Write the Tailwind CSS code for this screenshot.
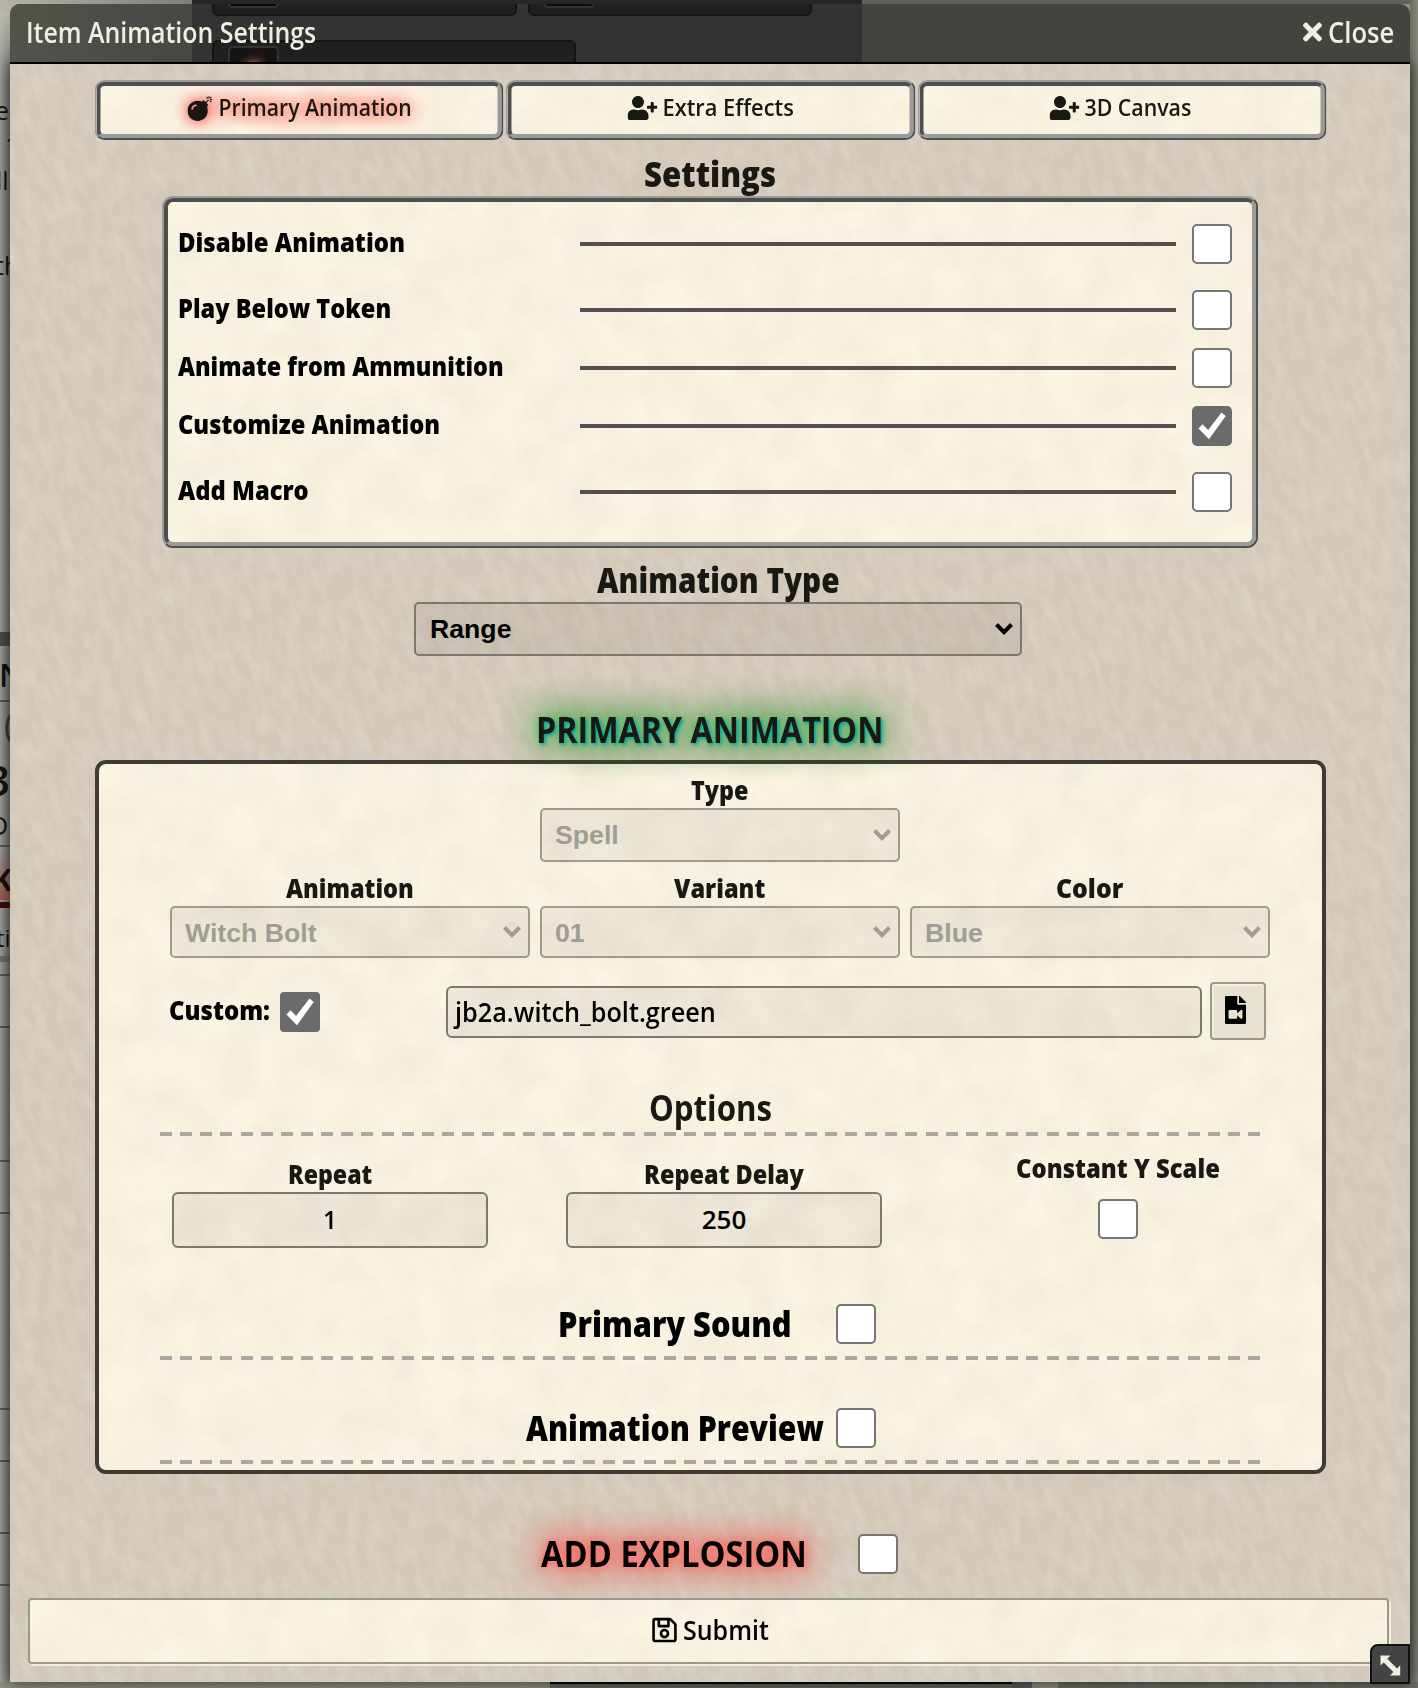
<!DOCTYPE html>
<html lang="en">
<head>
<meta charset="utf-8">
<title>Item Animation Settings</title>
<script src="https://cdn.jsdelivr.net/npm/@tailwindcss/browser@4"></script>
</head>
<body class="relative h-[1688px] w-[1418px] overflow-hidden bg-[#8e8f87] font-['Open_Sans','Noto_Sans',sans-serif] text-[#191813]">

<svg class="absolute size-0" aria-hidden="true">
  <defs>
    <filter id="stucco" x="0" y="0" width="100%" height="100%" color-interpolation-filters="sRGB">
      <feTurbulence type="fractalNoise" baseFrequency="0.09 0.04" numOctaves="3" seed="4"/>
      <feColorMatrix values="0 0 0 0 0.88  0 0 0 0 0.85  0 0 0 0 0.82  1.500 0 0 0 -0.500"/>
    </filter>
    <filter id="paper" x="0" y="0" width="100%" height="100%" color-interpolation-filters="sRGB">
      <feTurbulence type="fractalNoise" baseFrequency="0.025" numOctaves="5" seed="9"/>
      <feColorMatrix values="0 0 0 0 0.89  0 0 0 0 0.86  0 0 0 0 0.79  0.600 0 0 0 -0.150"/>
    </filter>
    <symbol id="check" viewBox="0 0 40 40"><path d="M6.5 22.5l4-4.2 5.6 5.6L29.5 6.5l4.2 3.4L17 33.2z" fill="#fff"/></symbol>
    <symbol id="chev" viewBox="0 0 20 16"><path d="M2.5 3.5L10 11.2l7.500-7.700" fill="none" stroke="currentColor" stroke-width="4"/></symbol>
    <symbol id="userplus" viewBox="0 0 640 512"><path fill="currentColor" d="M624 208h-64v-64c0-8.800-7.200-16-16-16h-32c-8.800 0-16 7.200-16 16v64h-64c-8.800 0-16 7.200-16 16v32c0 8.800 7.200 16 16 16h64v64c0 8.800 7.200 16 16 16h32c8.800 0 16-7.200 16-16v-64h64c8.800 0 16-7.200 16-16v-32c0-8.800-7.200-16-16-16zm-400 48c70.700 0 128-57.300 128-128S294.700 0 224 0 96 57.300 96 128s57.300 128 128 128zm89.600 32h-16.700c-22.200 10.200-46.900 16-72.900 16s-50.600-5.800-72.900-16h-16.700C60.200 288 0 348.200 0 422.400V464c0 26.500 21.500 48 48 48h352c26.500 0 48-21.500 48-48v-41.600c0-74.200-60.200-134.400-134.400-134.400z"/></symbol>
  </defs>
</svg>

<!-- Desktop behind the window -->
<div class="absolute inset-0 bg-[#8e8f87]"></div>
<div class="absolute top-0 left-0 h-full w-[10px] overflow-hidden bg-linear-to-r from-[#a3a49f] to-[#7c7d78] text-[#14140f]">
  <div class="absolute top-0 h-16 w-full bg-linear-to-b from-[#c0bfb0] to-transparent"></div>
  <div class="absolute top-[632px] h-[14px] w-full bg-[#4d4e4a]"></div>
  <div class="absolute top-[700px] h-[2px] w-full bg-[#5a5b56]"></div>
  <div class="absolute top-[845px] h-[2px] w-full bg-[#5a5b56]"></div>
  <div class="absolute top-[850px] h-[50px] w-full bg-linear-to-b from-transparent to-[#a85a55]"></div>
  <div class="absolute top-[902px] h-[6px] w-full bg-[#3f0c10]"></div>
  <div class="absolute top-[956px] h-[6px] w-full bg-[#70716a]"></div>
  <div class="absolute top-[974px] h-[2px] w-full bg-[#5a5b56]"></div>
  <div class="absolute top-[1026px] h-[2px] w-full bg-[#5a5b56]"></div>
  <div class="absolute top-[1160px] h-[2px] w-full bg-[#5a5b56]"></div>
  <div class="absolute top-[1212px] h-[2px] w-full bg-[#5a5b56]"></div>
  <div class="absolute top-[1408px] h-[2px] w-full bg-[#5a5b56]"></div>
  <div class="absolute top-[1460px] h-[2px] w-full bg-[#5a5b56]"></div>
  <div class="absolute top-[1532px] h-[2px] w-full bg-[#5a5b56]"></div>
  <div class="absolute top-[1584px] h-[2px] w-full bg-[#5a5b56]"></div>
  <span class="absolute top-[92px] left-[-5px] text-[25px] leading-9">e</span>
  <span class="absolute top-[127px] left-[5px] text-[25px] leading-9">1</span>
  <span class="absolute top-[162px] left-[-4px] text-[25px] leading-9">ll</span>
  <span class="absolute top-[247px] left-[-5px] text-[25px] leading-9">th</span>
  <span class="absolute top-[657px] left-[-1px] text-[32px] leading-9 font-semibold">N</span>
  <span class="absolute top-[707px] left-[4px] text-[34px] leading-9 text-[#3c3d38]">(</span>
  <span class="absolute top-[762px] left-[-14px] text-[42px] leading-9 font-semibold">3</span>
  <span class="absolute top-[807px] left-[-10px] text-[25px] leading-9">D</span>
  <span class="absolute top-[862px] left-[-8px] text-[30px] leading-9 font-bold">K</span>
  <span class="absolute top-[920px] left-[-4px] text-[24px] leading-9">ti</span>
</div>
<div class="absolute top-0 right-0 h-full w-[8px] bg-linear-to-r from-[#6a6b62] to-[#84857c]"></div>
<div class="absolute top-0 left-[10px] h-[4px] w-[1400px] bg-[#5f6056]"></div>
<div class="absolute top-0 left-0 h-[12px] w-[192px] bg-linear-to-r from-[#b5b4a7] to-[#7e7e74]"></div>
<div class="absolute top-0 left-[192px] h-[14px] w-[670px] bg-[#262626]"></div>
<div class="absolute bottom-0 left-0 flex h-[6px] w-full bg-[#8f8f86]">
  <div class="ml-[550px] h-full w-[462px] border-t-2 border-black bg-[#646464]"></div>
  <div class="h-full w-[20px] bg-[#5a5a5a]"></div>
  <div class="h-full w-[26px] bg-[#8f8f86]"></div>
  <div class="h-full flex-1 bg-[#6c6d66]"></div>
</div>

<!-- Window -->
<main class="absolute top-[4px] left-[10px] flex h-[1678px] w-[1400px] flex-col">
  <header class="relative z-10 h-[60px] shrink-0 overflow-hidden rounded-t-[10px] border-b-2 border-black bg-[#44433e]">
    <div class="absolute inset-y-0 left-0 w-[182px] bg-linear-to-r from-[#53534e] to-[#474743]"></div>
    <div class="absolute inset-y-0 left-[182px] w-[670px] bg-[#333333]"></div>
    <div class="absolute -top-2 left-[202px] h-[20px] w-[305px] rounded-b-[6px] border-2 border-[#141414] bg-[#202020]"></div>
    <div class="absolute -top-2 left-[518px] h-[20px] w-[284px] rounded-b-[6px] border-2 border-[#141414] bg-[#202020]"></div>
    <div class="absolute -top-4 left-[218px] h-[20px] w-[51px] rounded-[4px] border-2 border-[#333] bg-[#08080f]"></div>
    <div class="absolute -top-4 left-[534px] h-[20px] w-[51px] rounded-[4px] border-2 border-[#333] bg-[#0b0b18]"></div>
    <div class="absolute top-[36px] left-[202px] h-[40px] w-[364px] rounded-t-[6px] border-2 border-[#141414] bg-[#202020]"></div>
    <div class="absolute top-[42px] left-[218px] h-[40px] w-[51px] rounded-[5px] border-2 border-[#333] bg-[radial-gradient(circle_at_50%_22px,#7b6358_0_6px,#3a2018_12px,#181414_17px)]"></div>
    <div class="relative flex h-[56px] items-center pr-[16px] pl-[16px] text-[28px] font-semibold text-[#f0f0e0]">
      <h4 class="flex-1"><span data-w="290">Item Animation Settings</span></h4>
      <svg class="mr-[6px] h-[28px] w-[19px]" viewBox="0 0 352 512"><path fill="currentColor" d="M242.720 256l100.070-100.070c12.280-12.280 12.280-32.190 0-44.480l-22.240-22.240c-12.280-12.280-32.190-12.280-44.480 0L176 189.280 75.930 89.210c-12.280-12.280-32.190-12.280-44.480 0L9.210 111.450c-12.280 12.280-12.280 32.190 0 44.480L109.280 256 9.210 356.070c-12.280 12.280-12.280 32.190 0 44.480l22.240 22.240c12.280 12.280 32.200 12.280 44.480 0L176 322.720l100.070 100.070c12.280 12.280 32.200 12.280 44.480 0l22.240-22.240c12.280-12.280 12.280-32.190 0-44.480L242.720 256z"/></svg>
      <span data-w="66">Close</span>
    </div>
  </header>

  <section class="relative isolate flex-1 bg-[#d3c8b7] shadow-[0_0_16px_rgba(0,0,0,0.7)]">
    <svg class="absolute inset-0 -z-10 size-full"><g transform="rotate(-20 700 800)"><rect x="-400" y="-400" width="2300" height="2500" filter="url(#stucco)" opacity="0.75"/></g></svg>

    <!-- Tabs -->
    <nav class="mx-auto grid w-[1232px] translate-x-[0.5px] grid-cols-3 gap-[2px] pt-4 text-[23.500px] font-semibold">
      <div class="h-[60px] rounded-[10px] border-2 border-[#9b9b9b] border-r-[#4e4e4e] border-b-[#4e4e4e]">
        <div class="relative isolate flex h-full items-center justify-center gap-[6px] overflow-hidden rounded-[8px] border-4 border-[#4e4e4e] border-r-[#9b9b9b] border-b-[#9b9b9b] bg-[#fdf5e4] pb-[4px]">
          <svg class="absolute inset-0 -z-10 size-full"><rect width="100%" height="100%" filter="url(#paper)"/></svg>
          <svg class="size-[25px] drop-shadow-[0_0_8px_red]" viewBox="0 0 512 512"><path fill="currentColor" d="M440.500 88.500l-52 52L415 167c9.400 9.400 9.400 24.600 0 33.900l-17.400 17.400c11.800 26.100 18.400 55.100 18.400 85.600 0 114.900-93.100 208-208 208S0 418.900 0 304 93.100 96 208 96c30.500 0 59.500 6.600 85.600 18.400L311 97c9.400-9.400 24.600-9.400 33.900 0l26.500 26.500 52-52 17.100 17zM500 60h-24c-6.600 0-12 5.400-12 12s5.400 12 12 12h24c6.600 0 12-5.400 12-12s-5.400-12-12-12zM440 0c-6.600 0-12 5.400-12 12v24c0 6.600 5.400 12 12 12s12-5.400 12-12V12c0-6.600-5.400-12-12-12zm33.900 55l17-17c4.700-4.700 4.700-12.300 0-17-4.700-4.700-12.300-4.700-17 0l-17 17c-4.700 4.700-4.700 12.300 0 17 4.800 4.700 12.400 4.700 17 0zm-67.800 0c4.700 4.700 12.300 4.700 17 0 4.700-4.700 4.700-12.300 0-17l-17-17c-4.700-4.700-12.300-4.700-17 0-4.700 4.700-4.700 12.300 0 17l17 17zm67.800 34c-4.700-4.700-12.300-4.700-17 0-4.700 4.700-4.700 12.300 0 17l17 17c4.700 4.700 12.300 4.700 17 0 4.700-4.700 4.700-12.300 0-17l-17-17zM112 272c0-35.300 28.700-64 64-64 8.800 0 16-7.200 16-16s-7.200-16-16-16c-52.900 0-96 43.100-96 96 0 8.800 7.200 16 16 16s16-7.200 16-16z"/></svg>
          <span class="[text-shadow:0_0_20px_red,0_0_20px_#ff000080]" data-w="193">Primary Animation</span>
        </div>
      </div>
      <div class="h-[60px] rounded-[10px] border-2 border-[#9b9b9b] border-r-[#4e4e4e] border-b-[#4e4e4e]">
        <div class="relative isolate flex h-full items-center justify-center gap-[5px] overflow-hidden rounded-[8px] border-4 border-[#4e4e4e] border-r-[#9b9b9b] border-b-[#9b9b9b] bg-[#fdf5e4] pb-[4px]">
          <svg class="absolute inset-0 -z-10 size-full"><rect width="100%" height="100%" filter="url(#paper)"/></svg>
          <svg class="h-[24px] w-[30px]"><use href="#userplus"/></svg>
          <span data-w="131">Extra Effects</span>
        </div>
      </div>
      <div class="h-[60px] rounded-[10px] border-2 border-[#9b9b9b] border-r-[#4e4e4e] border-b-[#4e4e4e]">
        <div class="relative isolate flex h-full items-center justify-center gap-[5px] overflow-hidden rounded-[8px] border-4 border-[#4e4e4e] border-r-[#9b9b9b] border-b-[#9b9b9b] bg-[#fdf5e4] pr-[3px] pb-[4px]">
          <svg class="absolute inset-0 -z-10 size-full"><rect width="100%" height="100%" filter="url(#paper)"/></svg>
          <svg class="h-[24px] w-[30px]"><use href="#userplus"/></svg>
          <span data-w="107">3D Canvas</span>
        </div>
      </div>
    </nav>

    <!-- Settings -->
    <h2 class="h-[56px] pt-[10px] text-center text-[35px] leading-[48px] font-extrabold"><span data-w="132">Settings</span></h2>
    <div class="mx-auto h-[352px] w-[1096px] rounded-[11px] border-2 border-[#9b9b9b] border-r-[#4e4e4e] border-b-[#4e4e4e]">
      <div class="relative isolate h-full overflow-hidden rounded-[9px] border-4 border-[#4e4e4e] border-r-[#9b9b9b] border-b-[#9b9b9b] bg-[#fdf5e4] pt-[13px] pr-[20px] pl-[10px] text-[27px] font-extrabold text-black">
        <svg class="absolute inset-0 -z-10 size-full"><rect width="100%" height="100%" filter="url(#paper)"/></svg>
        <div class="mb-2 flex h-[58px] items-center">
          <label class="w-[402px] pb-[3px]"><span data-w="227">Disable Animation</span></label>
          <div class="mr-4 h-1 flex-1 bg-[#515151]"></div>
          <div class="size-[40px] rounded-[5px] border-2 border-[#767676] bg-white"></div>
        </div>
        <div class="flex h-[58px] items-center">
          <label class="w-[402px] pb-[3px]"><span data-w="213">Play Below Token</span></label>
          <div class="mr-4 h-1 flex-1 bg-[#515151]"></div>
          <div class="size-[40px] rounded-[5px] border-2 border-[#767676] bg-white"></div>
        </div>
        <div class="flex h-[58px] items-center">
          <label class="w-[402px] pb-[3px]"><span data-w="326">Animate from Ammunition</span></label>
          <div class="mr-4 h-1 flex-1 bg-[#515151]"></div>
          <div class="size-[40px] rounded-[5px] border-2 border-[#767676] bg-white"></div>
        </div>
        <div class="mb-2 flex h-[58px] items-center">
          <label class="w-[402px] pb-[3px]"><span data-w="262">Customize Animation</span></label>
          <div class="mr-4 h-1 flex-1 bg-[#515151]"></div>
          <div class="size-[40px] rounded-[5px] bg-[#6b6b6b]"><svg class="size-[40px]"><use href="#check"/></svg></div>
        </div>
        <div class="flex h-[58px] items-center">
          <label class="w-[402px] pb-[3px]"><span data-w="131">Add Macro</span></label>
          <div class="mr-4 h-1 flex-1 bg-[#515151]"></div>
          <div class="size-[40px] rounded-[5px] border-2 border-[#767676] bg-white"></div>
        </div>
      </div>
    </div>

    <!-- Animation type -->
    <div class="ml-[404px] w-[608px]">
      <h2 class="h-[54px] pt-[8px] text-center text-[35px] leading-[47px] font-extrabold"><span data-w="243">Animation Type</span></h2>
      <div class="flex h-[54px] items-center justify-between rounded-[5px] border-2 border-[#7a7971] bg-black/5 pr-[6px] pl-[14px] font-['Liberation_Sans',Arial,sans-serif] text-[26.670px] font-bold text-black">
        <span>Range</span><svg class="h-[16px] w-[20px]"><use href="#chev"/></svg>
      </div>
    </div>

    <h2 class="relative z-10 h-[104px] pt-[43px] text-center text-[35px] leading-[62px] font-bold"><span class="[text-shadow:2px_2px_4px_#00a5a5,0_0_10px_#4fc45a,0_0_40px_green,0_0_50px_green]" data-w="347">PRIMARY ANIMATION</span></h2>

    <!-- Primary animation panel -->
    <div class="relative isolate ml-[85px] flex h-[714px] w-[1231px] flex-col overflow-hidden rounded-[11px] border-4 border-[#3d3b36] bg-[#fdf5e4] pt-[7px] text-[27px]">
      <svg class="absolute inset-0 -z-10 size-full"><rect width="100%" height="100%" filter="url(#paper)"/></svg>
      <div class="ml-[71px] grid w-[1100px] grid-cols-[360px_360px_360px] gap-x-[10px] text-center font-bold">
        <div class="col-start-2">
          <div class="leading-[37px] font-extrabold"><span data-w="57">Type</span></div>
          <div class="flex h-[54px] items-center justify-between rounded-[5px] border-2 border-[#9c9b91] bg-black/5 pr-[6px] pl-[13px] font-['Liberation_Sans',Arial,sans-serif] text-[26.670px] text-[#9f9d97]"><span>Spell</span><svg class="h-[16px] w-[20px]"><use href="#chev"/></svg></div>
        </div>
        <div class="col-start-1 pt-[7px]">
          <div class="leading-[37px] font-extrabold"><span data-w="128">Animation</span></div>
          <div class="flex h-[52px] items-center justify-between rounded-[5px] border-2 border-[#9c9b91] bg-black/5 pr-[6px] pl-[13px] font-['Liberation_Sans',Arial,sans-serif] text-[26.670px] text-[#9f9d97]"><span class="pt-px">Witch Bolt</span><svg class="h-[16px] w-[20px]"><use href="#chev"/></svg></div>
        </div>
        <div class="pt-[7px]">
          <div class="leading-[37px] font-extrabold"><span data-w="91">Variant</span></div>
          <div class="flex h-[52px] items-center justify-between rounded-[5px] border-2 border-[#9c9b91] bg-black/5 pr-[6px] pl-[13px] font-['Liberation_Sans',Arial,sans-serif] text-[26.670px] text-[#9f9d97]"><span class="pt-px">01</span><svg class="h-[16px] w-[20px]"><use href="#chev"/></svg></div>
        </div>
        <div class="pt-[7px]">
          <div class="leading-[37px] font-extrabold"><span data-w="67">Color</span></div>
          <div class="flex h-[52px] items-center justify-between rounded-[5px] border-2 border-[#9c9b91] bg-black/5 pr-[6px] pl-[13px] font-['Liberation_Sans',Arial,sans-serif] text-[26.670px] text-[#9f9d97]"><span class="pt-px">Blue</span><svg class="h-[16px] w-[20px]"><use href="#chev"/></svg></div>
        </div>
      </div>

      <div class="mt-[24px] ml-[70px] flex h-[60px] items-center text-black">
        <label class="w-[111px] pb-[3px] font-extrabold"><span data-w="101">Custom:</span></label>
        <div class="size-[40px] rounded-[4px] bg-[#6b6b6b]"><svg class="size-[40px]"><use href="#check"/></svg></div>
        <div class="ml-[126px] flex h-[52px] w-[756px] items-center rounded-[6px] border-2 border-[#7a7971] bg-black/5 pl-[7px] font-semibold"><span data-w="261">jb2a.witch_bolt.green</span></div>
        <div class="mb-[2px] ml-[8px] flex h-[58px] w-[56px] items-center justify-center rounded-[4px] border-2 border-[#98998b] bg-[#e8e0d0] pb-[3px] shadow-[inset_2px_2px_0_#eef0e2]">
          <svg class="mr-[5px] h-[28px] w-[21px]" viewBox="0 0 384 512"><path d="M384 121.941V128H256V0h6.059c6.365 0 12.470 2.529 16.971 7.029l97.941 97.941A24.005 24.005 0 0 1 384 121.941zM224 136V0H24C10.745 0 0 10.745 0 24v464c0 13.255 10.745 24 24 24h336c13.255 0 24-10.745 24-24V160H248c-13.200 0-24-10.800-24-24zm96 144.016v111.963c0 21.445-25.943 31.998-40.971 16.971L224 353.941V392c0 13.255-10.745 24-24 24H88c-13.255 0-24-10.745-24-24V280c0-13.255 10.745-24 24-24h112c13.255 0 24 10.745 24 24v38.059l55.029-55.013c15.011-15.010 40.971-4.491 40.971 16.970z"/></svg>
        </div>
      </div>

      <h2 class="mt-[40px] -mb-px text-center text-[35px] leading-[51px] font-bold"><span data-w="123">Options</span></h2>
      <div class="ml-[61px] h-1 w-[1100px] bg-[repeating-linear-gradient(90deg,#aaa7a0_0_12px,transparent_12px_20.148px)]"></div>

      <div class="mt-[12px] ml-[34px] grid h-[100px] w-[1182px] grid-cols-3 text-center">
        <div class="pt-[7px]">
          <div class="leading-[37px] font-extrabold"><span data-w="84">Repeat</span></div>
          <div class="mx-auto h-[56px] w-[316px] rounded-[6px] border-2 border-[#7a7971] bg-black/5 text-[26px] leading-[50px] font-semibold text-black"><span data-w="14">1</span></div>
        </div>
        <div class="pt-[7px]">
          <div class="leading-[37px] font-extrabold"><span data-w="160">Repeat Delay</span></div>
          <div class="mx-auto h-[56px] w-[316px] rounded-[6px] border-2 border-[#7a7971] bg-black/5 text-[26px] leading-[50px] font-semibold text-black"><span data-w="45">250</span></div>
        </div>
        <div class="flex flex-col items-center">
          <div class="leading-[39px] font-extrabold"><span data-w="204">Constant Y Scale</span></div>
          <div class="mt-[12px] size-[40px] rounded-[5px] border-2 border-[#767676] bg-white"></div>
        </div>
      </div>

      <div class="mt-[56px] mb-3 ml-[459px] flex h-[40px] items-center gap-[44px] text-[35px] leading-[38px] font-extrabold text-black">
        <span data-w="234">Primary Sound</span>
        <div class="size-[40px] rounded-[5px] border-2 border-[#767676] bg-white"></div>
      </div>
      <div class="ml-[61px] h-1 w-[1100px] shrink-0 bg-[repeating-linear-gradient(90deg,#aaa7a0_0_12px,transparent_12px_20.148px)]"></div>
      <div class="mt-[48px] mb-3 ml-[427px] flex h-[40px] items-center gap-[12px] text-[35px] leading-[38px] font-extrabold text-black">
        <span data-w="298">Animation Preview</span>
        <div class="size-[40px] rounded-[5px] border-2 border-[#767676] bg-white"></div>
      </div>
      <div class="ml-[61px] h-1 w-[1100px] shrink-0 bg-[repeating-linear-gradient(90deg,#aaa7a0_0_12px,transparent_12px_20.148px)]"></div>
    </div>

    <div class="mt-[60px] ml-[531px] flex h-[40px] items-center gap-[51px] text-[35px] leading-[38px] font-bold text-black">
      <span class="[text-shadow:1px_1px_4px_#ff8a8a,0_0_10px_#ff5a4a,0_0_40px_red,0_0_50px_#ff000080]" data-w="266">ADD EXPLOSION</span>
      <div class="size-[40px] rounded-[5px] border-2 border-[#767676] bg-white"></div>
    </div>

    <div class="relative isolate mt-[24px] ml-[18px] flex h-[66px] w-[1361px] items-center justify-center gap-[6px] rounded-[4px] border-2 border-[#97998c] bg-[#fdf5e4] pb-[2px] pl-[3px] text-[27px] font-semibold text-black shadow-[2px_2px_0_#efede0]">
      <svg class="absolute inset-0 -z-10 size-full"><rect width="100%" height="100%" filter="url(#paper)"/></svg>
      <svg class="h-[28px] w-[25px]" viewBox="0 0 448 512"><path d="M433.941 129.941l-83.882-83.882A48 48 0 0 0 316.118 32H48C21.490 32 0 53.490 0 80v352c0 26.510 21.490 48 48 48h352c26.510 0 48-21.490 48-48V163.882a48 48 0 0 0-14.059-33.941zM272 80v80H144V80h128zm122 352H54a6 6 0 0 1-6-6V86a6 6 0 0 1 6-6h42v104c0 13.255 10.745 24 24 24h176c13.255 0 24-10.745 24-24V83.882l78.243 78.243a6 6 0 0 1 1.757 4.243V426a6 6 0 0 1-6 6zM224 232c-48.523 0-88 39.477-88 88s39.477 88 88 88 88-39.477 88-88-39.477-88-88-88zm0 128c-22.056 0-40-17.944-40-40s17.944-40 40-40 40 17.944 40 40-17.944 40-40 40z"/></svg>
      <span data-w="86">Submit</span>
    </div>

    <!-- Resize handle -->
    <div class="absolute right-0 bottom-[-2px] size-[40px] rounded-tl-[8px] border-2 border-[#111] bg-[#444]">
      <svg class="size-[36px]" viewBox="0 0 36 36"><path d="M8.500 9.500h10l-3.200 3.200 9.700 9.700 3.200-3.200v10.300H18l3.400-3.400-9.700-9.700-3.200 3.200z" fill="#f0f0e0"/></svg>
    </div>
  </section>
</main>

<script>
  const fit = (el) => {
    const natural = el.offsetWidth;
    const width = Number(el.dataset.w);
    el.style.transform = `scaleX(${width / natural})`;
    el.style.marginRight = `${width - natural}px`;
  };
  const observer = new ResizeObserver((entries) => entries.forEach((entry) => fit(entry.target)));
  for (const el of document.querySelectorAll('[data-w]')) {
    el.style.display = 'inline-block';
    el.style.flexShrink = '0';
    el.style.whiteSpace = 'nowrap';
    el.style.transformOrigin = 'left center';
    fit(el);
    observer.observe(el);
  }
</script>
</body>
</html>
